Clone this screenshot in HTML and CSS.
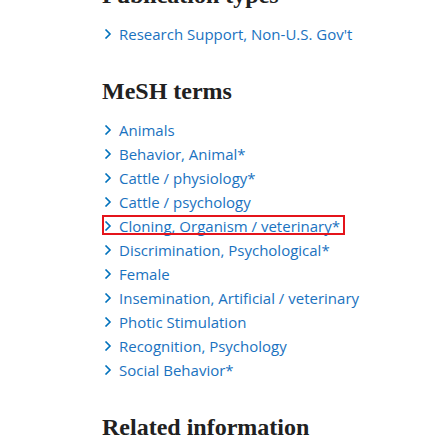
FILE: index.html
```html
<!DOCTYPE html>
<html lang="en">
<head>
<meta charset="utf-8">
<title>Publication types and MeSH terms</title>
<link rel="stylesheet" href="styles.css">
</head>
<body>
<main class="page">
  <section class="sec">
    <h2 class="title">Publication types</h2>
    <ul class="terms">
      <li><a class="term" href="#"><svg class="chev" viewBox="0 0 8 10" width="8" height="10"><path d="M1.5 0.5 L6 5 L1.5 9.5" /></svg>Research Support, Non-U.S. Gov't</a></li>
    </ul>
  </section>
  <section class="sec">
    <h2 class="title">MeSH terms</h2>
    <ul class="terms">
      <li><a class="term" href="#"><svg class="chev" viewBox="0 0 8 10" width="8" height="10"><path d="M1.5 0.5 L6 5 L1.5 9.5" /></svg>Animals</a></li>
      <li><a class="term" href="#"><svg class="chev" viewBox="0 0 8 10" width="8" height="10"><path d="M1.5 0.5 L6 5 L1.5 9.5" /></svg>Behavior, Animal*</a></li>
      <li><a class="term" href="#"><svg class="chev" viewBox="0 0 8 10" width="8" height="10"><path d="M1.5 0.5 L6 5 L1.5 9.5" /></svg>Cattle / physiology*</a></li>
      <li><a class="term" href="#"><svg class="chev" viewBox="0 0 8 10" width="8" height="10"><path d="M1.5 0.5 L6 5 L1.5 9.5" /></svg>Cattle / psychology</a></li>
      <li><a class="term hl" href="#"><svg class="chev" viewBox="0 0 8 10" width="8" height="10"><path d="M1.5 0.5 L6 5 L1.5 9.5" /></svg>Cloning, Organism / veterinary*</a></li>
      <li><a class="term" href="#"><svg class="chev" viewBox="0 0 8 10" width="8" height="10"><path d="M1.5 0.5 L6 5 L1.5 9.5" /></svg>Discrimination, Psychological*</a></li>
      <li><a class="term" href="#"><svg class="chev" viewBox="0 0 8 10" width="8" height="10"><path d="M1.5 0.5 L6 5 L1.5 9.5" /></svg>Female</a></li>
      <li><a class="term" href="#"><svg class="chev" viewBox="0 0 8 10" width="8" height="10"><path d="M1.5 0.5 L6 5 L1.5 9.5" /></svg>Insemination, Artificial / veterinary</a></li>
      <li><a class="term" href="#"><svg class="chev" viewBox="0 0 8 10" width="8" height="10"><path d="M1.5 0.5 L6 5 L1.5 9.5" /></svg>Photic Stimulation</a></li>
      <li><a class="term" href="#"><svg class="chev" viewBox="0 0 8 10" width="8" height="10"><path d="M1.5 0.5 L6 5 L1.5 9.5" /></svg>Recognition, Psychology</a></li>
      <li><a class="term" href="#"><svg class="chev" viewBox="0 0 8 10" width="8" height="10"><path d="M1.5 0.5 L6 5 L1.5 9.5" /></svg>Social Behavior*</a></li>
    </ul>
  </section>
  <section class="sec">
    <h2 class="title">Related information</h2>
  </section>
</main>
</body>
</html>
```
FILE: styles.css
```css
html, body {
  margin: 0;
  padding: 0;
  background: #ffffff;
}

.page {
  margin-top: -20px;
  padding-left: 102px;
}

.sec {
  margin: 0 0 30px 0;
}

.title {
  margin: 0 0 12px 0;
  font-family: "Liberation Serif", serif;
  font-weight: bold;
  font-size: 24px;
  line-height: 30px;
  color: #212121;
}

.terms {
  list-style: none;
  margin: 0;
  padding: 0 0 0 2px;
}

.terms li {
  font-family: "Open Sans", "Noto Sans", sans-serif;
  font-size: 15px;
  line-height: 24px;
}

.term {
  color: #1a72c0;
  text-decoration: none;
}

.chev {
  display: inline-block;
  width: 8px;
  height: 10px;
  margin-right: 7px;
  vertical-align: 1px;
  fill: none;
  stroke: #0071bc;
  stroke-width: 1.6;
}

.hl {
  display: inline-block;
  line-height: 17px;
  padding: 3px 5px 0 2px;
  margin-left: -2px;
  outline: 2px solid #e4141b;
  outline-offset: -2px;
}
```
